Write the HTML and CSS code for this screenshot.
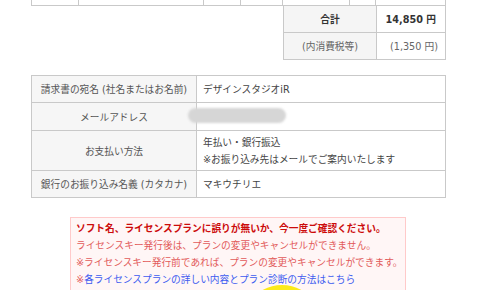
FILE: index.html
```html
<!DOCTYPE html>
<html lang="ja">
<head>
<meta charset="utf-8">
<link rel="stylesheet" href="styles.css">
</head>
<body>
<div class="page">
  <div class="items">
    <div class="ic w1"></div><div class="ic w2"></div><div class="ic w3"></div><div class="ic w4"></div><div class="ic w5"></div><div class="ic w6"></div><div class="ic w7 last"></div>
  </div>
  <div class="summary">
    <div class="srow">
      <div class="slabel bold">合計</div>
      <div class="sval bold">14,850 円</div>
    </div>
    <div class="srow">
      <div class="slabel muted">(内消費税等)</div>
      <div class="sval muted">(1,350 円)</div>
    </div>
  </div>
  <div class="info">
    <div class="irow h27">
      <div class="ilabel">請求書の宛名 (社名またはお名前)</div>
      <div class="ival">デザインスタジオiR</div>
    </div>
    <div class="irow h28">
      <div class="ilabel">メールアドレス</div>
      <div class="ival"><span class="redact"></span></div>
    </div>
    <div class="irow h40">
      <div class="ilabel">お支払い方法</div>
      <div class="ival multi"><span>年払い・銀行振込</span><span>※お振り込み先はメールでご案内いたします</span></div>
    </div>
    <div class="irow h27 lastrow">
      <div class="ilabel">銀行のお振り込み名義 (カタカナ)</div>
      <div class="ival">マキウチリエ</div>
    </div>
  </div>
  <div class="notice">
    <p class="strong">ソフト名、ライセンスプランに誤りが無いか、今一度ご確認ください。</p>
    <p>ライセンスキー発行後は、プランの変更やキャンセルができません。</p>
    <p>※ライセンスキー発行前であれば、プランの変更やキャンセルができます。</p>
    <p>※<a href="#" class="link">各ライセンスプランの詳しい内容とプラン診断の方法はこちら</a></p>
    <div class="btn"></div>
  </div>
</div>
</body>
</html>
```
FILE: styles.css
```css
* { box-sizing: border-box; margin: 0; padding: 0; }
html, body { background: #fff; }
body {
  font-family: "DejaVu Sans", "Noto Sans CJK JP", sans-serif;
  font-size: 9.7px;
  color: #444;
  overflow: hidden;
  height: 290px;
}
.page { margin-left: 31px; width: 415px; }
.items { display: flex; height: 6px; border-bottom: 1px solid #c9c9c9; }
.ic { border-left: 1px solid #c9c9c9; height: 5px; }
.ic.last { border-right: 1px solid #c9c9c9; }
.w1 { width: 47px; } .w2 { width: 125px; } .w3 { width: 37px; } .w4 { width: 42px; }
.w5 { width: 67px; } .w6 { width: 26px; } .w7 { width: 71px; }
.summary { margin-left: 252px; width: 163px; border-left: 1px solid #c9c9c9; border-right: 1px solid #c9c9c9; }
.srow { display: flex; height: 27px; border-bottom: 1px solid #c9c9c9; }
.slabel { width: 93px; background: #f5f5f5; border-right: 1px solid #c9c9c9; display: flex; align-items: center; justify-content: center; }
.sval { flex: 1; display: flex; align-items: center; justify-content: flex-end; padding-right: 9px; }
.bold { font-weight: bold; color: #333; }
.muted { color: #666; }
.sval.muted { padding-right: 7px; }
.info { margin-top: 15px; border: 1px solid #c9c9c9; border-bottom: none; }
.irow { display: flex; border-bottom: 1px solid #c9c9c9; }
.h27 { height: 27px; } .h28 { height: 28px; } .h40 { height: 40px; }
.ilabel { width: 165px; background: #f6f6f6; border-right: 1px solid #c9c9c9; display: flex; align-items: center; justify-content: center; color: #555; }
.ival { flex: 1; display: flex; align-items: center; padding-left: 6px; color: #444; position: relative; }
.ival.multi { flex-direction: column; align-items: flex-start; justify-content: center; line-height: 17px; }
.redact { position: absolute; left: -9px; top: 5px; width: 98px; height: 15px; border-radius: 8px; background: #d6d6d6; filter: blur(0.8px); }
.notice { margin-left: 39px; width: 336px; margin-top: 19px; height: 90px; background: #fff6f6; border: 1px solid #ffcaca; border-bottom: none; padding: 2px 0 0 5px; line-height: 17px; color: #e25a5a; }
.notice .strong { font-weight: bold; color: #cc0b0b; }
.link { color: #3d5cf0; text-decoration: none; }
.btn { margin: -3px 0 0 180px; width: 52px; height: 30px; border-radius: 50%; background: #fbea1a; }
```
